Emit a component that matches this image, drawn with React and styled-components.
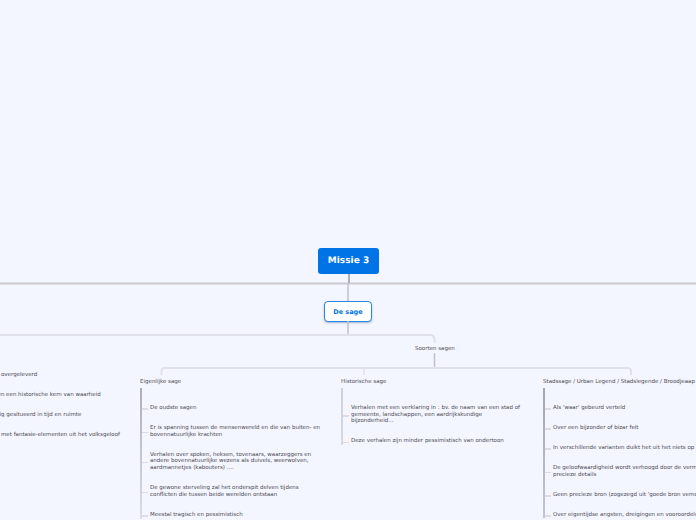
import React from "react";
import styled, { createGlobalStyle } from "styled-components";

const intro = [
  { text: "overgeleverd", shift: 0 },
  { text: "en een historische kern van waarheid", shift: -3.5 },
  { text: "ig gesitueerd in tijd en ruimte", shift: -1.5 },
  { text: "met fantasie-elementen uit het volksgeloof", shift: 0 },
];

const branches = [
  {
    label: "Eigenlijke sage",
    from: "#aeaeb4",
    to: "#dcdce4",
    leaves: [
      ["De oudste sagen"],
      ["Er is spanning tussen de mensenwereld en die van buiten- en", "bovennatuurlijke krachten"],
      ["Verhalen over spoken, heksen, tovenaars, waarzeggers en", "andere bovennatuurlijke wezens als duivels, weerwolven,", "aardmannetjes (kabouters) ...."],
      ["De gewone sterveling zal het onderspit delven tijdens", "conflicten die tussen beide werelden ontstaan"],
      ["Meestal tragisch en pessimistisch"],
    ],
  },
  {
    label: "Historische sage",
    from: "#d0d0d8",
    to: "#d8d8e0",
    leaves: [
      ["Verhalen met een verklaring in : bv. de naam van een stad of", "gemeente, landschappen, een aardrijkskundige", "bijzonderheid..."],
      ["Deze verhalen zijn minder pessimistisch van ondertoon"],
    ],
  },
  {
    label: "Stadssage / Urban Legend / Stadslegende / Broodjeaap",
    from: "#a6a6aa",
    to: "#c4c4ca",
    leaves: [
      ["Als 'waar' gebeurd verteld"],
      ["Over een bijzonder of bizar feit"],
      ["In verschillende varianten duikt het uit het niets op"],
      ["De geloofwaardigheid wordt verhoogd door de vermelding van", "precieze details"],
      ["Geen precieze bron (zogezegd uit 'goede bron vernomen')"],
      ["Over eigentijdse angsten, dreigingen en vooroordelen"],
    ],
  },
];

export default function App() {
  return (
    <Canvas>
      <GlobalStyle />
      <Links width="696" height="520" fill="none">
        <path d="M0 283.500H696" stroke="#c9c9cf" strokeWidth="2" />
        <path d="M349 274V283" stroke="#b0b0b4" strokeWidth="2" />
        <path d="M348 284V301" stroke="#c2c2c8" strokeWidth="1.500" />
        <path d="M348 321V335" stroke="#c2c2c8" strokeWidth="1.500" />
        <path d="M0 335H430Q434.500 335 434.500 340V343" stroke="#e0e0e8" strokeWidth="2" />
        <path d="M434.500 353V368" stroke="#c0c0c6" strokeWidth="1.500" />
        <path d="M161.500 375V371Q161.500 368 164.500 368H628Q631 368 631 371V375" stroke="#e0e0e8" strokeWidth="2" />
        <path d="M364 368V375" stroke="#e0e0e8" strokeWidth="1.500" />
      </Links>
      <Header>
        <RootNode>Missie 3</RootNode>
        <MainNode>De sage</MainNode>
      </Header>
      <GroupLabel>Soorten sagen</GroupLabel>
      <BranchRow>
        <IntroList>
          {intro.map((item) => (
            <LeafText key={item.text} $shift={item.shift}>{item.text}</LeafText>
          ))}
        </IntroList>
        {branches.map((branch) => (
          <Branch key={branch.label}>
            <BranchTitle>{branch.label}</BranchTitle>
            <LeafList $from={branch.from} $to={branch.to}>
              {branch.leaves.map((lines) => (
                <TickedLeaf key={lines[0]}>
                  {lines.map((line) => (
                    <LeafText key={line}>{line}</LeafText>
                  ))}
                </TickedLeaf>
              ))}
            </LeafList>
          </Branch>
        ))}
      </BranchRow>
    </Canvas>
  );
}

const GlobalStyle = createGlobalStyle`
  html, body {
    margin: 0;
    padding: 0;
    background: #f4f6ff;
  }
`;

const Canvas = styled.div`
  position: relative;
  width: 696px;
  height: 520px;
  overflow: hidden;
  background: #f4f6ff;
  font-family: "DejaVu Sans", sans-serif;
  text-rendering: geometricPrecision;
`;

const Links = styled.svg`
  position: absolute;
  left: 0;
  top: 0;
`;

const Header = styled.div`
  display: flex;
  flex-direction: column;
  align-items: flex-start;
  gap: 27px;
  padding: 248px 0 0 318px;
`;

const RootNode = styled.div`
  width: 61px;
  height: 26px;
  display: flex;
  align-items: center;
  justify-content: center;
  border-radius: 3px;
  background: #0073e6;
  color: #fff;
  font-size: 9px;
  font-weight: 700;
`;

const MainNode = styled.div`
  box-sizing: border-box;
  width: 48px;
  height: 21px;
  margin-left: 6px;
  display: flex;
  align-items: center;
  justify-content: center;
  border: 1.5px solid #2f86e0;
  border-radius: 4px;
  background: #fff;
  box-shadow: 0 1px 2px rgba(40, 80, 140, 0.4);
  color: #0073e6;
  font-size: 6.500px;
  font-weight: 700;
`;

const GroupLabel = styled.div`
  height: 7px;
  margin: 24px 0 19px 415px;
  color: #4a4a52;
  font-size: 5.500px;
  line-height: 6.700px;
  white-space: nowrap;
`;

const BranchRow = styled.div`
  display: grid;
  grid-template-columns: 140px 201px 202px 153px;
`;

const IntroList = styled.div`
  display: flex;
  flex-direction: column;
  gap: 13.300px;
  padding-left: 1px;
  overflow: hidden;
`;

const Branch = styled.div`
  display: flex;
  flex-direction: column;
  padding-top: 7px;
  min-width: 0;
`;

const BranchTitle = styled.div`
  height: 7px;
  color: #4a4a52;
  font-size: 5.500px;
  line-height: 6.700px;
  white-space: nowrap;
`;

const LeafList = styled.div`
  display: flex;
  flex-direction: column;
  align-self: flex-start;
  gap: 13.300px;
  margin-top: 2px;
  padding: 17px 0 0 8px;
  border-left: 2px solid;
  border-image: linear-gradient(${(p) => p.$from}, ${(p) => p.$to}) 1;
`;

const TickedLeaf = styled.div`
  position: relative;

  &::before {
    content: "";
    position: absolute;
    left: -8px;
    top: 50%;
    width: 6px;
    height: 1.500px;
    background: #dcdce4;
  }
`;

const LeafText = styled.div`
  color: #4a4a52;
  font-size: 5.500px;
  line-height: 6.700px;
  white-space: nowrap;
  text-indent: ${(p) => p.$shift || 0}px;
`;
